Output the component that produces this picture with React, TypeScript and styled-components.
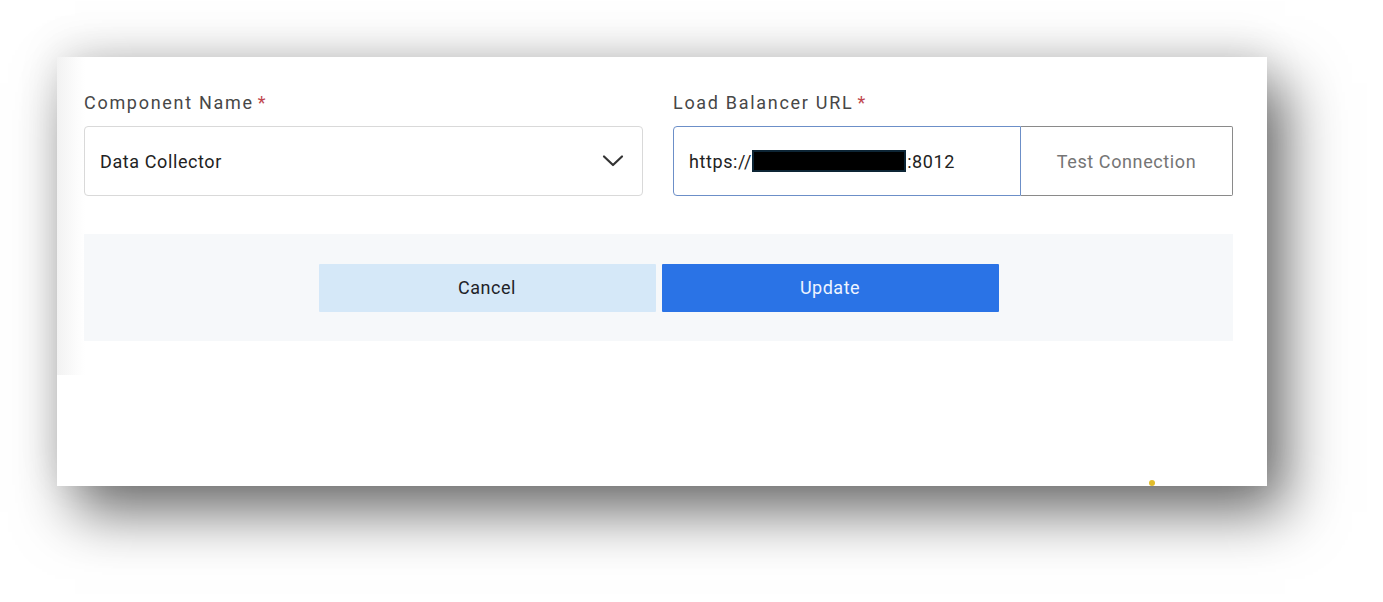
import React from "react";
import styled, { createGlobalStyle } from "styled-components";

const Global = createGlobalStyle`
  html, body { margin: 0; padding: 0; background: #ffffff; }
  body { font-family: Roboto, "Liberation Sans", Arial, sans-serif; }
`;

const Stage = styled.div`
  width: 1383px;
  height: 602px;
  overflow: hidden;
  padding: 57px 0 0 57px;
  box-sizing: border-box;
  background: #ffffff;
`;

const Card = styled.div`
  position: relative;
  width: 1210px;
  height: 429px;
  box-sizing: border-box;
  padding: 31px 34px 0 27px;
  background:
    linear-gradient(90deg, #f2f2f2 0px, #fcfcfc 20px, #ffffff 28px) 0 0 / 28px 318px no-repeat,
    #ffffff;
  box-shadow: 18px 26px 55px rgba(0, 0, 0, 0.58), 0 -10px 40px rgba(0, 0, 0, 0.09);
`;

const Fields = styled.div`
  display: grid;
  grid-template-columns: 559px 560px;
  column-gap: 30px;
`;

const Field = styled.div`
  display: flex;
  flex-direction: column;
  gap: 9px;
`;

const Label = styled.label`
  font-size: 18px;
  letter-spacing: 1.7px;
  color: #474747;
  line-height: 29px;
`;

const Req = styled.span`
  color: #c0474f;
  margin-left: 4px;
`;

const Select = styled.div`
  height: 70px;
  box-sizing: border-box;
  border: 1px solid #d9d9d9;
  border-radius: 4px;
  display: flex;
  align-items: center;
  justify-content: space-between;
  padding: 0 18px 0 15px;
  font-size: 18px;
  letter-spacing: 0.6px;
  color: #222;
  background: #fff;
`;

const Group = styled.div`
  display: flex;
  height: 70px;
`;

const UrlInput = styled.div`
  width: 348px;
  box-sizing: border-box;
  border: 1.5px solid #6c8fc8;
  border-radius: 4px 0 0 4px;
  display: flex;
  align-items: center;
  padding-left: 15px;
  font-size: 18px;
  letter-spacing: 0.6px;
  color: #222;
  background: #fff;
`;

const Redacted = styled.span`
  display: inline-block;
  width: 154px;
  height: 22px;
  box-sizing: border-box;
  background: #000;
  border: 2px solid #0d2535;
  margin: 0 1px 0 0;
`;

const TestButton = styled.button`
  flex: 1;
  box-sizing: border-box;
  border: 1px solid #8a8a8a;
  border-left: none;
  border-radius: 0 2px 2px 0;
  background: #fff;
  color: #757575;
  font-family: inherit;
  font-size: 18px;
  letter-spacing: 0.6px;
  cursor: pointer;
`;

const Footer = styled.div`
  margin-top: 38px;
  height: 107px;
  background: #f6f8fa;
  display: flex;
  justify-content: center;
  align-items: center;
  gap: 6px;
`;

const Button = styled.button<{ $primary?: boolean }>`
  width: 337px;
  height: 48px;
  border: none;
  border-radius: 1px;
  font-family: inherit;
  font-size: 18px;
  letter-spacing: 0.5px;
  background: ${(p) => (p.$primary ? "#2a73e6" : "#d5e8f8")};
  color: ${(p) => (p.$primary ? "#eef4ff" : "#1f2328")};
  cursor: pointer;
`;

const Dot = styled.span`
  position: absolute;
  left: 1092px;
  bottom: 0px;
  width: 6px;
  height: 6px;
  border-radius: 50%;
  background: #e2bd2c;
`;

const Chevron = () => (
  <svg width="22" height="14" viewBox="0 0 22 14" fill="none">
    <path d="M2 2.5 L11 11 L20 2.5" stroke="#333" strokeWidth="2.2" strokeLinecap="round" strokeLinejoin="round" />
  </svg>
);

export default function App() {
  return (
    <Stage>
      <Global />
      <Card>
        <Fields>
          <Field>
            <Label>
              Component Name<Req>*</Req>
            </Label>
            <Select>
              <span>Data Collector</span>
              <Chevron />
            </Select>
          </Field>
          <Field>
            <Label>
              Load Balancer URL<Req>*</Req>
            </Label>
            <Group>
              <UrlInput>
                https://<Redacted />:8012
              </UrlInput>
              <TestButton>Test Connection</TestButton>
            </Group>
          </Field>
        </Fields>
        <Footer>
          <Button>Cancel</Button>
          <Button $primary>Update</Button>
        </Footer>
        <Dot />
      </Card>
    </Stage>
  );
}
